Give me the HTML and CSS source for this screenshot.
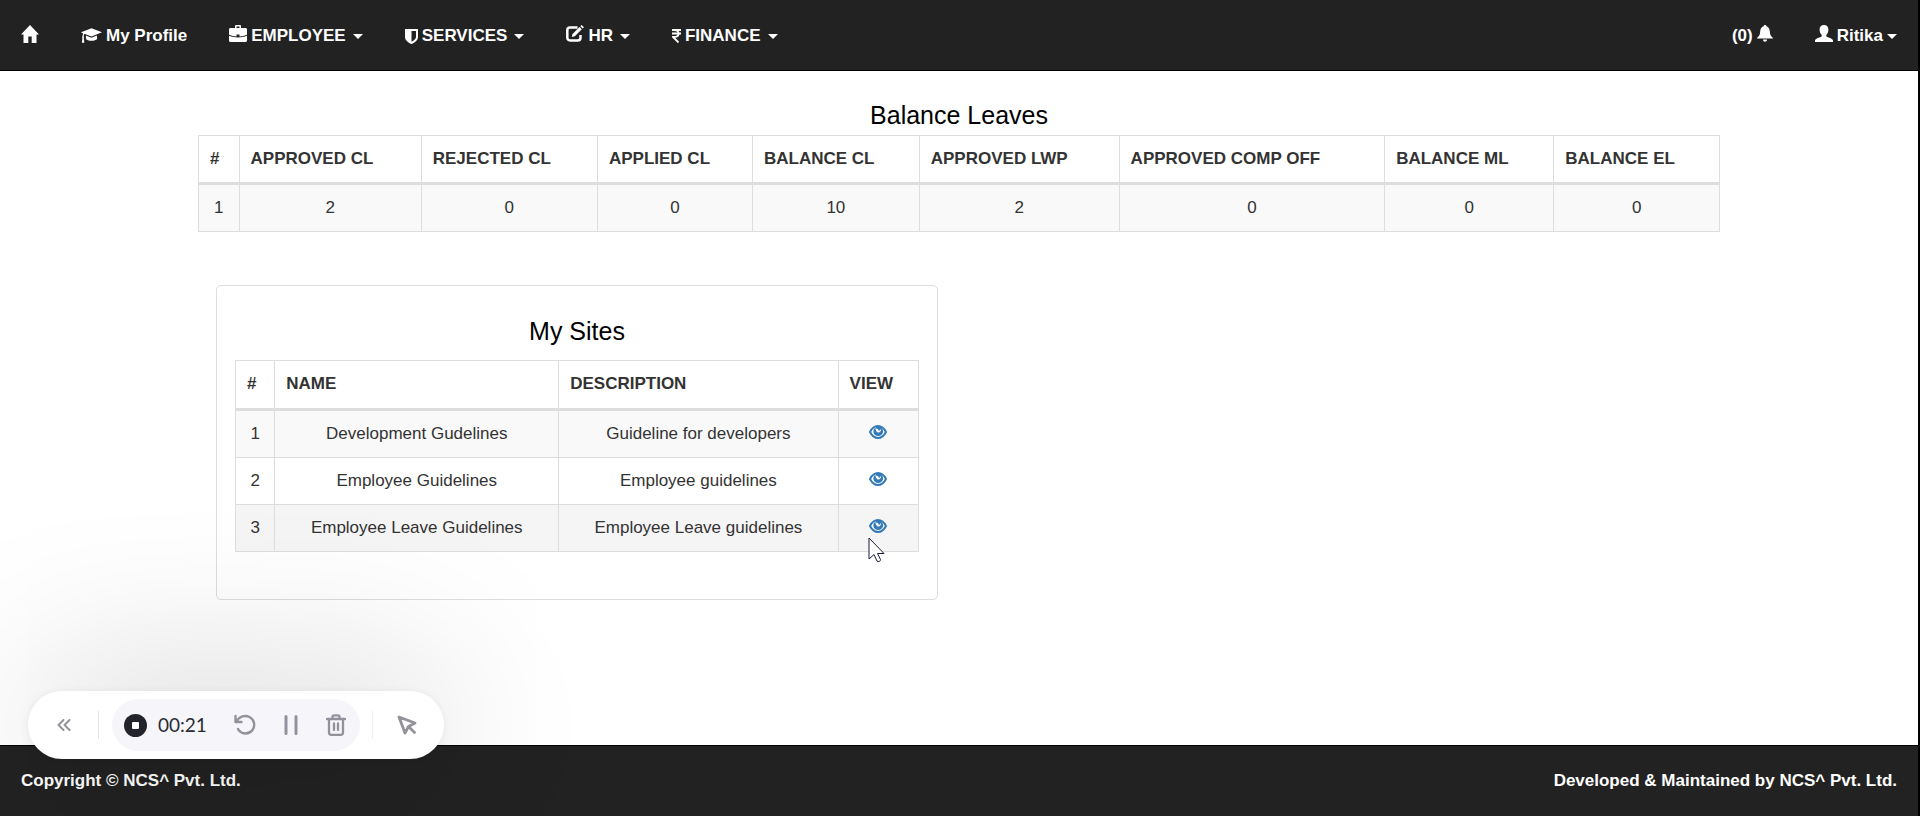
FILE: index.html
```html
<!DOCTYPE html>
<html lang="en">
<head>
  <meta charset="UTF-8">
  <meta name="viewport" content="width=device-width, initial-scale=1.0">
  <title>Employee Dashboard</title>
  <link rel="stylesheet" href="styles.css">
</head>
<body>
  <svg class="symbols" aria-hidden="true">
    <symbol id="eye" viewBox="0 0 18 14">
      <path d="M1 7c2-4 4.500-6 8-6s6 2 8 6c-2 4-4.500 6-8 6s-6-2-8-6z" fill="none" stroke="#337ab7" stroke-width="2"/>
      <path d="M6.800 2.200C6 5 7.500 7.500 9.500 7.500S12.600 5 11.800 2.200C16 5 14 11 9.200 11S2.500 5 6.800 2.200z"/>
      <path d="M7 1h5v3l-2 2-1-2-2-.5z"/>
    </symbol>
  </svg>

  <nav class="navbar">
    <ul class="nav">
      <li>
        <a href="#" aria-label="Home">
          <svg class="lift" width="18" height="18" viewBox="0 0 18 18"><path d="M9 0l9 9.500h-2.500V18h-4.800v-6.500H7.300V18H2.500V9.500H0z"/></svg>
        </a>
      </li>
      <li>
        <a href="#">
          <svg width="21" height="16" viewBox="0 0 22 16"><path d="M11 0l11 4.200-11 4.200-6.800-2.600-.6.200c-.6.500-.8 1.300-.8 2.200.6.500.6 1.300.1 1.800L3.500 15H.9l.6-5c-.5-.5-.5-1.300.1-1.800 0-1 .2-1.900.6-2.700L0 4.200z"/><path d="M5.200 7.600L11 9.800l5.600-2.200.3 3.200c-.9 1.400-3.200 2.200-5.900 2.200-2.600 0-4.900-.8-5.900-2.200z"/></svg>
          My Profile
        </a>
      </li>
      <li>
        <button type="button">
          <svg class="lift" width="18" height="17" viewBox="0 0 18 17"><path fill-rule="evenodd" d="M6 3V1.200C6 .5 6.500 0 7.200 0h3.600c.7 0 1.200.5 1.200 1.200V3h4.500c.9 0 1.500.6 1.500 1.500v5.300c-2.400 1-5 1.600-7.500 1.800V9.500h-3v2.100C5 11.400 2.400 10.800 0 9.800V4.500C0 3.600.6 3 1.500 3zm1.500-1.500V3h3V1.500zM0 10.800c2.800 1 5.800 1.600 9 1.600s6.200-.6 9-1.600v4.700c0 .9-.6 1.500-1.500 1.500h-15C.6 17 0 16.400 0 15.500z"/></svg>
          EMPLOYEE <span class="caret"></span>
        </button>
      </li>
      <li>
        <button type="button">
          <svg width="13" height="15" viewBox="0 0 13 15"><path fill-rule="evenodd" d="M0 0h13v8c0 3-3 5.500-6.500 7C3 13.500 0 11 0 8zM6.500 2v10.700C9 11.400 11 9.900 11 8V2z"/></svg>
          SERVICES <span class="caret"></span>
        </button>
      </li>
      <li>
        <button type="button">
          <svg class="lift" width="18" height="17" viewBox="0 0 18 17"><path d="M11.500 2.500H4A2.700 2.700 0 0 0 1.300 5.200v7.600A2.700 2.700 0 0 0 4 15.500h7.800a2.700 2.700 0 0 0 2.700-2.700V10" fill="none" stroke="#fff" stroke-width="2.500"/><path d="M13.500 2l2.300 2.300-7 7L5.800 12l.7-3zM14.300 1.200L15.500 0 18 2.300l-1.300 1.200z"/></svg>
          HR <span class="caret"></span>
        </button>
      </li>
      <li>
        <button type="button">
          <svg width="9" height="14" viewBox="0 0 9 14"><path d="M0 1h9M0 4.500h9M2.500 1C8 1 8 8 2.500 8H1l5.500 5.500" fill="none" stroke="#fff" stroke-width="1.800"/></svg>
          FINANCE <span class="caret"></span>
        </button>
      </li>
    </ul>
    <ul class="nav">
      <li>
        <a href="#">
          (0)
          <svg class="lift" width="16" height="17" viewBox="0 0 16 17"><path d="M8 0c.8 0 1.300.5 1.400 1.200 2.300.7 3.200 2.700 3.400 5 .2 3 .7 4.600 2.700 6.300.3.300.5.700.4 1H.1c-.1-.3.1-.7.4-1 2-1.700 2.500-3.300 2.700-6.300.2-2.300 1.100-4.300 3.400-5C6.700.5 7.200 0 8 0zM6 14.500h4C10 17.500 6 17.500 6 14.500z"/></svg>
        </a>
      </li>
      <li>
        <button type="button">
          <svg class="lift" width="18" height="17" viewBox="0 0 18 17"><path d="M9 0c2.700 0 4.400 1.700 4.400 4.400 0 2.600-.9 4.300-2.100 5.500v1.600c1 .8 6.700 2 6.700 4V17H0v-1.500c0-2 5.700-3.200 6.700-4V9.900C5.500 8.700 4.600 7 4.600 4.400 4.600 1.700 6.300 0 9 0z"/></svg>
          Ritika<span class="caret caret-tight"></span>
        </button>
      </li>
    </ul>
  </nav>

  <main class="container">
    <h2>Balance Leaves</h2>
    <table class="leaves">
      <thead>
        <tr>
          <th>#</th>
          <th>APPROVED CL</th>
          <th>REJECTED CL</th>
          <th>APPLIED CL</th>
          <th>BALANCE CL</th>
          <th>APPROVED LWP</th>
          <th>APPROVED COMP OFF</th>
          <th>BALANCE ML</th>
          <th>BALANCE EL</th>
        </tr>
      </thead>
      <tbody>
        <tr>
          <td>1</td>
          <td>2</td>
          <td>0</td>
          <td>0</td>
          <td>10</td>
          <td>2</td>
          <td>0</td>
          <td>0</td>
          <td>0</td>
        </tr>
      </tbody>
    </table>

    <section class="panel">
      <h2>My Sites</h2>
      <table class="sites">
        <thead>
          <tr>
            <th>#</th>
            <th>NAME</th>
            <th>DESCRIPTION</th>
            <th>VIEW</th>
          </tr>
        </thead>
        <tbody>
          <tr>
            <td>1</td>
            <td>Development Gudelines</td>
            <td>Guideline for developers</td>
            <td><a href="#" aria-label="View"><svg class="eye"><use href="#eye"/></svg></a></td>
          </tr>
          <tr>
            <td>2</td>
            <td>Employee Guidelines</td>
            <td>Employee guidelines</td>
            <td><a href="#" aria-label="View"><svg class="eye"><use href="#eye"/></svg></a></td>
          </tr>
          <tr class="active">
            <td>3</td>
            <td>Employee Leave Guidelines</td>
            <td>Employee Leave guidelines</td>
            <td>
              <a href="#" aria-label="View"><svg class="eye"><use href="#eye"/></svg></a>
              <svg class="pointer" viewBox="0 0 17 26"><path d="M1 1v21l5-4.500L9 24c1 1.500 4 0 3.500-1.500L9.500 16.500H16z" fill="#fff" stroke="#1b1b3a"/></svg>
            </td>
          </tr>
        </tbody>
      </table>
    </section>
  </main>

  <footer class="footer">
    <span>Copyright © NCS^ Pvt. Ltd.</span>
    <span>Developed &amp; Maintained by NCS^ Pvt. Ltd.</span>
  </footer>

  <div class="recorder">
    <button type="button" class="collapse" aria-label="Collapse">
      <svg width="14" height="12" viewBox="0 0 14 12"><path d="M6.500 1l-5 5 5 5M12.500 1l-5 5 5 5"/></svg>
    </button>
    <div class="controls">
      <button type="button" aria-label="Stop">
        <svg width="23" height="23" viewBox="0 0 23 23"><circle class="stop" cx="11.500" cy="11.500" r="11.500"/><rect class="square" x="8" y="8" width="7" height="7" rx="1"/></svg>
      </button>
      <span class="time">00:21</span>
      <button type="button" class="restart" aria-label="Restart">
        <svg width="22" height="22" viewBox="0 0 22 22"><path d="M1.500 2v6h6M2 8C5.500 2 11 .8 15.500 3c5 2.500 6 9 3 13-3.500 4.500-10 4.500-13.500.5L4 15" stroke-width="2.400"/></svg>
      </button>
      <button type="button" class="pause" aria-label="Pause">
        <svg width="14" height="20" viewBox="0 0 14 20"><path d="M2 1.500v17M12 1.500v17" stroke-width="3"/></svg>
      </button>
      <button type="button" aria-label="Delete">
        <svg width="20" height="22" viewBox="0 0 20 22"><path d="M1 5h18M3 5v13.500A2.300 2.300 0 0 0 5.300 20.800h9.400A2.300 2.300 0 0 0 17 18.500V5M6.500 4.500V3a1.700 1.700 0 0 1 1.700-1.700h3.600A1.700 1.700 0 0 1 13.500 3v1.500M8 9.500v6.500M12 9.500v6.500" stroke-width="2.300"/></svg>
      </button>
    </div>
    <button type="button" class="cursor" aria-label="Cursor">
      <svg width="20" height="20" viewBox="0 0 20 20"><path d="M2 2l16 6-6.500 3.500L8 18zM11.500 11.500l6 6" stroke-width="2.800"/></svg>
    </button>
  </div>
</body>
</html>
```
FILE: styles.css
```css
* {
  box-sizing: border-box;
}
body {
  display: flex;
  flex-direction: column;
  min-height: 100vh;
  margin: 0;
  border-right: 2px solid #000;
  background-color: #fff;
  color: #333;
  font-family: "Liberation Sans", Arial, sans-serif;
  font-size: 17px;
  line-height: 24px;
}
button {
  padding: 0;
  border: none;
  background: none;
  color: inherit;
  font: inherit;
  cursor: pointer;
}
.symbols {
  display: none;
}

/* navbar */
.navbar {
  display: flex;
  justify-content: space-between;
  height: 71px;
  background-color: #222;
  border-bottom: 1px solid #000;
}
.nav {
  display: flex;
  margin: 0;
  padding: 0;
  list-style: none;
}
.nav a, .nav button {
  display: flex;
  align-items: center;
  gap: 4px;
  height: 70px;
  padding: 2px 21px 0;
  color: #fff;
  font-weight: bold;
  text-decoration: none;
}
.nav svg {
  fill: #fff;
}
.nav .lift {
  margin-bottom: 5px;
}
.caret {
  margin-left: 3px;
  border-top: 5px solid #fff;
  border-left: 5px solid transparent;
  border-right: 5px solid transparent;
}
.caret-tight {
  margin-left: 0;
}

/* content */
.container {
  flex: 1;
  width: 100%;
  max-width: 1522px;
  margin: 0 auto;
  padding: 30px 0;
}
h2 {
  margin: 0 0 6px;
  color: #000;
  font-size: 25px;
  font-weight: normal;
  line-height: 28px;
  text-align: center;
}
table {
  width: 100%;
  border-collapse: collapse;
}
th, td {
  padding: 11px;
  border: 1px solid #ddd;
}
th {
  border-bottom-width: 3px;
  text-align: left;
}
td {
  text-align: center;
}
tbody tr:nth-child(odd) {
  background-color: #f9f9f9;
}
tbody tr.active {
  background-color: #f5f5f5;
}
.panel {
  max-width: 722px;
  margin: 53px 18px 0;
  padding: 31px 18px 47px;
  border: 1px solid #ddd;
  border-radius: 5px;
}
.panel h2 {
  margin-bottom: 15px;
}
.sites th {
  padding-bottom: 12px;
}
.sites td {
  position: relative;
}
.eye {
  width: 18px;
  height: 14px;
  fill: #337ab7;
}
.pointer {
  position: absolute;
  top: 32px;
  left: 29px;
  width: 17px;
  height: 26px;
}

/* footer */
.footer {
  display: flex;
  justify-content: space-between;
  align-items: center;
  height: 71px;
  padding: 0 21px;
  background-color: #222;
  border-top: 1px solid #000;
  color: #fff;
  font-weight: bold;
}

/* recorder bar */
.recorder {
  position: fixed;
  left: 28px;
  bottom: 57px;
  display: flex;
  align-items: center;
  height: 68px;
  padding: 0 27px 0 29px;
  border-radius: 34px;
  background-color: #fff;
  box-shadow: 0 0 170px rgba(0, 0, 0, 0.26), 0 2px 12px rgba(0, 0, 0, 0.08);
}
.recorder button {
  display: flex;
}
.recorder svg {
  fill: none;
  stroke: #93929c;
  stroke-width: 2;
  stroke-linecap: round;
  stroke-linejoin: round;
}
.recorder .collapse {
  padding: 8px 27px 8px 0;
  border-right: 1px solid #e4e4e8;
}
.recorder .cursor {
  padding: 4px 0 4px 24px;
  border-left: 1px solid #eeeef2;
}
.controls {
  display: flex;
  align-items: center;
  height: 52px;
  margin: 0 12px 0 13px;
  padding: 0 14px 0 12px;
  border-radius: 26px;
  background-color: #f6f5fa;
}
.recorder .stop {
  fill: #23232b;
  stroke: none;
}
.recorder .square {
  fill: #fff;
  stroke: none;
}
.time {
  margin: 0 27px 0 11px;
  color: #2b2b33;
  font-family: Lato, sans-serif;
  font-size: 19px;
}
.recorder .pause {
  margin: 0 28px;
}
```
